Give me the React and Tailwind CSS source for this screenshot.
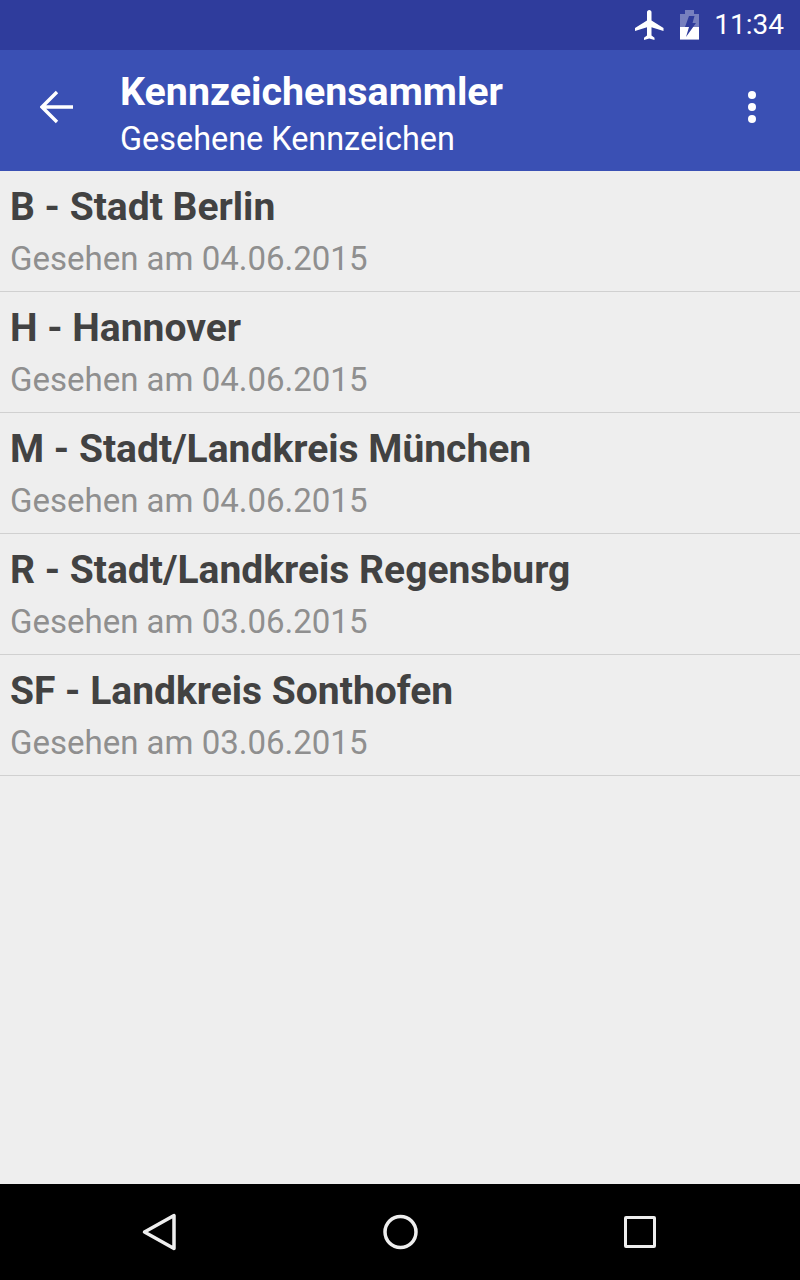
const items = [
  { title: "B - Stadt Berlin", date: "Gesehen am 04.06.2015" },
  { title: "H - Hannover", date: "Gesehen am 04.06.2015" },
  { title: "M - Stadt/Landkreis München", date: "Gesehen am 04.06.2015" },
  { title: "R - Stadt/Landkreis Regensburg", date: "Gesehen am 03.06.2015" },
  { title: "SF - Landkreis Sonthofen", date: "Gesehen am 03.06.2015" },
];

function StatusBar() {
  return (
    <div className="h-[50px] bg-[#2f3c9c] flex items-center justify-end text-white">
      <svg width="36" height="36" viewBox="0 0 24 24" fill="white">
        <path d="M21 16v-2l-8-5V3.5C13 2.67 12.33 2 11.5 2S10 2.67 10 3.5V9l-8 5v2l8-2.5V19l-2 1.5V22l3.5-1 3.5 1v-1.5L13 19v-5.5l8 2.5z" />
      </svg>
      <svg className="ml-[12px]" width="20" height="30" viewBox="0 0 20 30">
        <path d="M5 0h9v4h5v25.5H0V4h5z" fill="white" fillOpacity="0.35" />
        <path d="M0 29.5V17h19v12.5z" fill="white" />
        <path d="M9 6h5.5l-2 7H16L6 27l3-10H5z" fill="#2f3c9c" />
      </svg>
      <span className="ml-[14px] mr-[16px] text-[28px] leading-none font-['Roboto',sans-serif]">11:34</span>
    </div>
  );
}

function ActionBar() {
  return (
    <div className="h-[121px] bg-[#3a50b4] flex items-center text-white font-['Roboto',sans-serif]">
      <div className="w-[120px] shrink-0 pl-[40px] pb-[8px]">
        <svg width="34" height="34" viewBox="0 0 34 34" fill="none" stroke="white" strokeWidth="3.4">
          <path d="M33 17H3M17 2L2 17l15 15" />
        </svg>
      </div>
      <div className="flex-1 pt-[7px]">
        <div className="text-[39.4px] leading-[44px] font-bold">Kennzeichensammler</div>
        <div className="text-[32.4px] leading-[38px] mt-[6px]">Gesehene Kennzeichen</div>
      </div>
      <div className="w-[8px] mr-[44px] pb-[8px] flex flex-col gap-[4px]">
        <div className="w-[8px] h-[8px] rounded-full bg-white"></div>
        <div className="w-[8px] h-[8px] rounded-full bg-white"></div>
        <div className="w-[8px] h-[8px] rounded-full bg-white"></div>
      </div>
    </div>
  );
}

function NavBar() {
  return (
    <div className="h-[96px] bg-black flex items-center justify-between pl-[141px] pr-[144px]">
      <svg width="36" height="38" viewBox="0 0 36 38" fill="none" stroke="#eeeeee" strokeWidth="3.5" strokeLinejoin="round">
        <path d="M33 2.5v33L3.5 19z" />
      </svg>
      <svg width="36" height="36" viewBox="0 0 36 36" fill="none" stroke="#eeeeee" strokeWidth="3.5">
        <circle cx="17.5" cy="18" r="15.5" />
      </svg>
      <div className="w-[32px] h-[32px] border-[3.5px] border-[#eeeeee] rounded-[2px]"></div>
    </div>
  );
}

export default function App() {
  return (
    <div className="w-[800px] h-[1280px] flex flex-col bg-[#eeeeee] font-['Roboto',sans-serif]">
      <StatusBar />
      <ActionBar />
      <div className="flex-1">
        {items.map((item) => (
          <div key={item.title} className="h-[121px] border-b border-[#d0d0d0] pl-[10px]">
            <div className="pt-[12px] text-[39px] leading-[48px] font-bold text-[#424242]">{item.title}</div>
            <div className="mt-[7px] text-[33px] leading-[42px] text-[#8f8f8f]">{item.date}</div>
          </div>
        ))}
      </div>
      <NavBar />
    </div>
  );
}
